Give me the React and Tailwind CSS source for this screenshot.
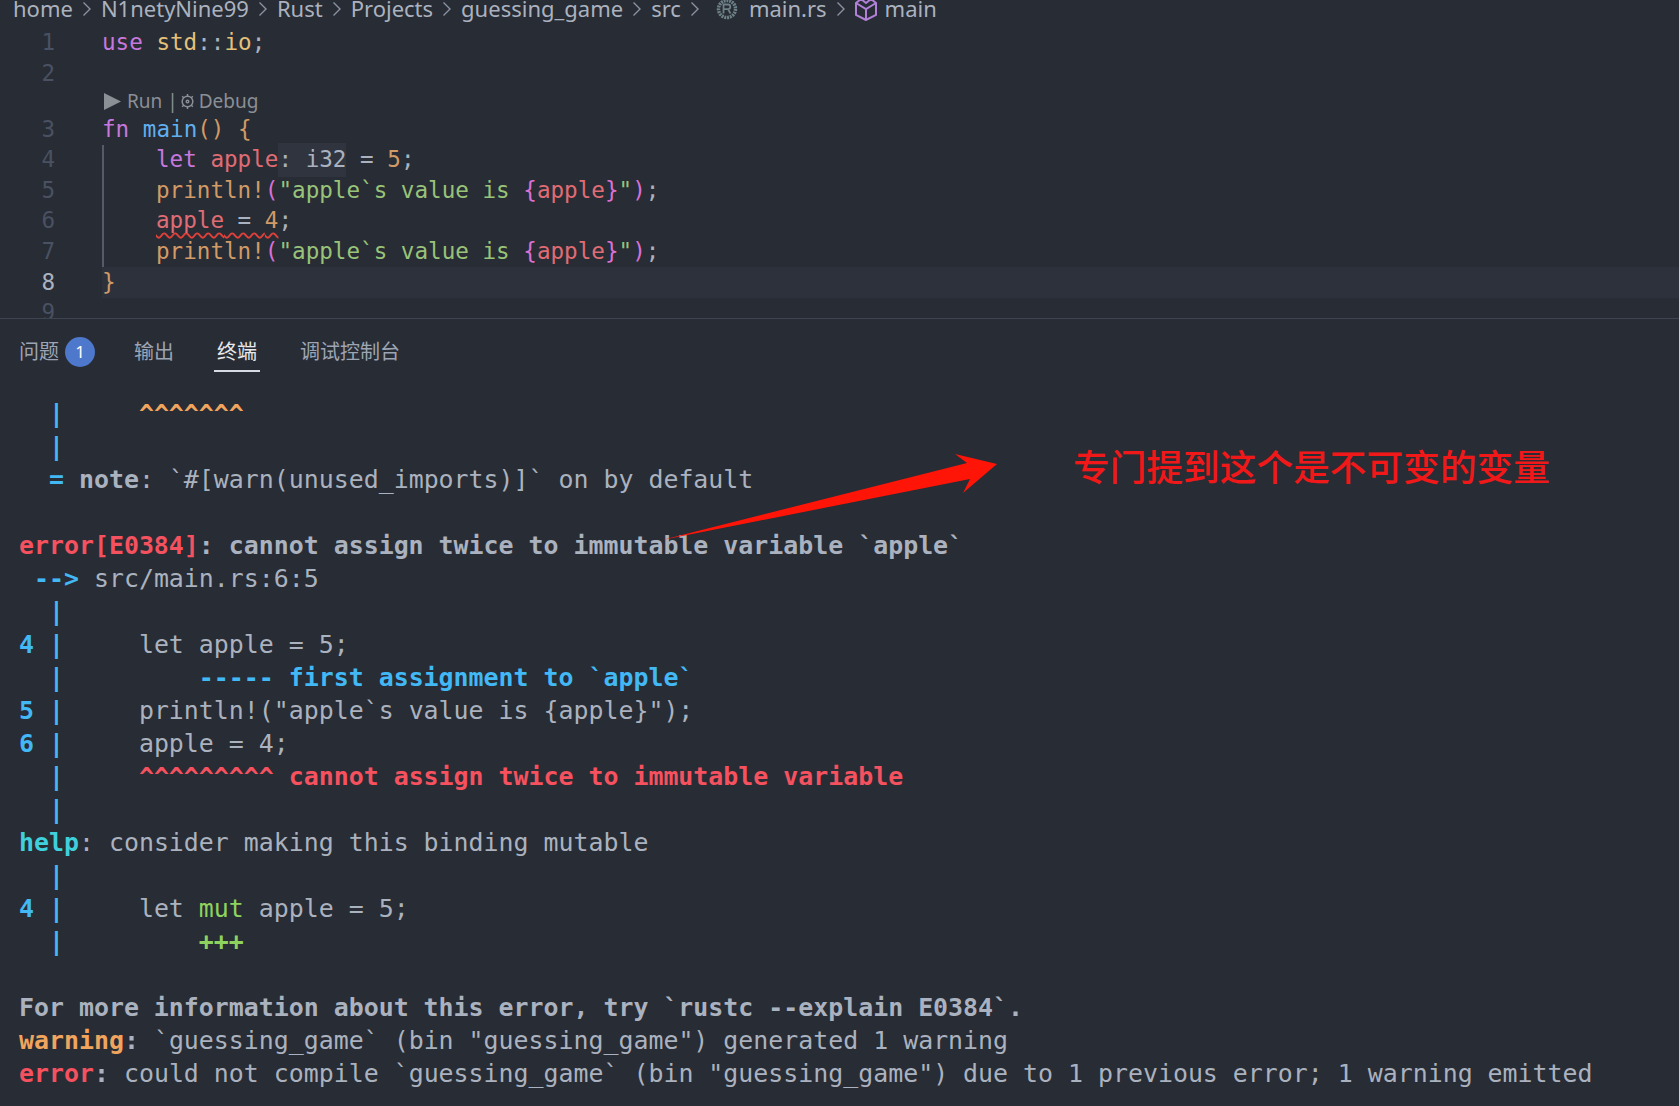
import React from "react";

const mono = "font-['DejaVu_Sans_Mono','Liberation_Mono',monospace]";
const sans = "font-['Noto_Sans','Noto_Sans_CJK_SC',sans-serif]";

const blue = "text-[#42b8f5] font-bold";
const red = "text-[#f5515f] font-bold";
const green = "text-[#8fd35f] font-bold";
const orange = "text-[#f0a45d] font-bold";
const cyan = "text-[#3fd0dc] font-bold";
const strong = "text-[#abb2bf] font-bold";

// [className, text] pairs for each terminal row
const terminalRows = [
  [[blue, "  |"], [orange, "     ^^^^^^^"]],
  [[blue, "  |"]],
  [[blue, "  = "], [strong, "note"], ["", ": `#[warn(unused_imports)]` on by default"]],
  [],
  [[red, "error[E0384]"], [strong, ": cannot assign twice to immutable variable `apple`"]],
  [[blue, " --> "], ["", "src/main.rs:6:5"]],
  [[blue, "  |"]],
  [[blue, "4 |"], ["", "     let apple = 5;"]],
  [[blue, "  |"], [blue, "         ----- first assignment to `apple`"]],
  [[blue, "5 |"], ["", '     println!("apple`s value is {apple}");']],
  [[blue, "6 |"], ["", "     apple = 4;"]],
  [[blue, "  |"], [red, "     ^^^^^^^^^ cannot assign twice to immutable variable"]],
  [[blue, "  |"]],
  [[cyan, "help"], ["", ": consider making this binding mutable"]],
  [[blue, "  |"]],
  [[blue, "4 |"], ["", "     let "], ["text-[#8fd35f]", "mut"], ["", " apple = 5;"]],
  [[blue, "  |"], [green, "         +++"]],
  [],
  [[strong, "For more information about this error, try `rustc --explain E0384`."]],
  [[orange, "warning"], [strong, ": "], ["", '`guessing_game` (bin "guessing_game") generated 1 warning']],
  [[red, "error"], [strong, ": "], ["", 'could not compile `guessing_game` (bin "guessing_game") due to 1 previous error; 1 warning emitted']],
];

const kw = "text-[#c678dd]";
const fn = "text-[#61afef]";
const vari = "text-[#e06c75]";
const str = "text-[#98c379]";
const num = "text-[#d19a66]";
const gold = "text-[#e5c07b]";
const plain = "text-[#abb2bf]";
const brace = "text-[#da70d6]";

const Println = () => (
  <>
    <span className={num}>println!</span>
    <span className={brace}>(</span>
    <span className={str}>"apple`s value is </span>
    <span className={brace}>{"{"}</span>
    <span className={vari}>apple</span>
    <span className={brace}>{"}"}</span>
    <span className={str}>"</span>
    <span className={brace}>)</span>
    <span className={plain}>;</span>
  </>
);

const CodeLine = ({ n, active, guide, children }) => (
  <div className="flex h-[30.6px] items-center">
    <div className={`w-[55px] text-right ${active ? "text-[#abb2bf]" : "text-[#495162]"}`}>{n}</div>
    <div className={`ml-[47px] flex h-full flex-1 items-center whitespace-pre ${active ? "bg-[#2c313c]" : ""} ${guide ? "border-l-2 border-[#555a66]" : ""}`}>
      {children}
    </div>
  </div>
);

const Chevron = () => (
  <svg width="10" height="18" viewBox="0 0 10 18" fill="none" stroke="#8b92a0" strokeWidth="1.4" className="mx-[9px]">
    <path d="M1.5 2.5 8 9l-6.5 6.5" />
  </svg>
);

const Breadcrumb = () => (
  <div className={`flex h-[28px] items-center overflow-hidden pl-[13px] text-[22px] text-[#abb2bf] ${sans}`}>
    <div className="-mt-[11px] flex items-center whitespace-nowrap">
      <span>home</span>
      <Chevron />
      <span>N1netyNine99</span>
      <Chevron />
      <span>Rust</span>
      <Chevron />
      <span>Projects</span>
      <Chevron />
      <span>guessing_game</span>
      <Chevron />
      <span>src</span>
      <Chevron />
      <svg width="24" height="24" viewBox="0 0 24 24" className="ml-[6px] mr-[3px]" fill="none" stroke="#6d8086">
        <circle cx="12" cy="12" r="8.5" strokeWidth="3.5" strokeDasharray="2 0.8" />
        <path d="M8.5 16.5v-9h4.5a2.3 2.3 0 0 1 0 4.6H8.5m4.5 0 2.5 4.4" strokeWidth="1.8" />
      </svg>
      <span className="ml-[7px]">main.rs</span>
      <Chevron />
      <svg width="24" height="24" viewBox="0 0 24 24" fill="none" stroke="#b180d7" strokeWidth="2" className="-ml-[1px]">
        <path d="M12 23 2 18V6l5-4 5 4 5-4 5 4v12z" />
        <path d="M2 6l10 6 10-6M12 12v11" />
      </svg>
      <span className="ml-[7px]">main</span>
    </div>
  </div>
);

const Editor = () => (
  <div className={`h-[319px] overflow-hidden border-b border-[#3e4452] text-[22.6px] ${mono}`}>
    <Breadcrumb />
    <CodeLine n={1}>
      <span className={kw}>use</span>
      <span className={gold}> std</span>
      <span className={plain}>::</span>
      <span className={gold}>io</span>
      <span className={plain}>;</span>
    </CodeLine>
    <CodeLine n={2} />
    <div className={`ml-[104px] flex h-[25px] items-center text-[19px] text-[#8b8f96] ${sans}`}>
      <svg width="17" height="17" viewBox="0 0 18 18" fill="#8b8f96">
        <path d="M0 0l18 9-18 9z" />
      </svg>
      <span className="ml-[6px]">Run | </span>
      <svg width="17" height="17" viewBox="0 0 16 16" fill="none" stroke="#8b8f96" strokeWidth="1.4" className="ml-[1px] mr-[3px]">
        <circle cx="8" cy="8" r="5" />
        <circle cx="8" cy="8" r="1.2" />
        <path d="M8 1v2M8 13v2M3 3l1.4 1.4M11.6 11.6 13 13M13 3l-1.4 1.4M4.4 11.6 3 13" />
      </svg>
      <span>Debug</span>
    </div>
    <CodeLine n={3}>
      <span className={kw}>fn</span>
      <span className={fn}> main</span>
      <span className={num}>() {"{"}</span>
    </CodeLine>
    <CodeLine n={4} guide>
      <span className="ml-[52px]" />
      <span className={kw}>let</span>
      <span className={vari}> apple</span>
      <span className="bg-[#2f343f] text-[#abb2bf]">: i32</span>
      <span className={plain}> = </span>
      <span className={num}>5</span>
      <span className={plain}>;</span>
    </CodeLine>
    <CodeLine n={5} guide>
      <span className="ml-[52px]" />
      <Println />
    </CodeLine>
    <CodeLine n={6} guide>
      <span className="ml-[52px]" />
      <span className="underline decoration-wavy decoration-[#e0403a] decoration-[1.5px] underline-offset-4">
        <span className={vari}>apple</span>
        <span className={plain}> = </span>
        <span className={num}>4</span>
      </span>
      <span className={plain}>;</span>
    </CodeLine>
    <CodeLine n={7} guide>
      <span className="ml-[52px]" />
      <Println />
    </CodeLine>
    <CodeLine n={8} active>
      <span className={num}>{"}"}</span>
    </CodeLine>
    <CodeLine n={9} />
  </div>
);

const Tabs = () => (
  <div className={`flex h-[78px] items-start pl-[19px] pt-[18px] text-[20px] text-[#9da5b4] ${sans}`}>
    <div className="flex h-[30px] items-center">
      <span>问题</span>
      <span className="ml-[6px] flex h-[30px] w-[30px] items-center justify-center rounded-full bg-[#4d78cc] text-[17px] text-white">1</span>
    </div>
    <span className="ml-[39px] flex h-[30px] items-center">输出</span>
    <div className="ml-[40px] flex h-[35px] flex-col items-center border-b-2 border-[#d7dae0] px-[3px] text-[#e6e8ec]">
      <span className="flex h-[30px] items-center">终端</span>
    </div>
    <span className="ml-[40px] flex h-[30px] items-center">调试控制台</span>
  </div>
);

const Terminal = () => (
  <div className={`px-[19px] text-[24.9px] text-[#abb2bf] ${mono}`}>
    {terminalRows.map((row, i) => (
      <div key={i} className="h-[33px] whitespace-pre leading-[33px]">
        {row.map(([cls, text], j) => (
          <span key={j} className={cls}>{text}</span>
        ))}
      </div>
    ))}
  </div>
);

export default function App() {
  return (
    <div className="relative h-[1106px] w-full overflow-hidden bg-[#282c34]">
      <Editor />
      <Tabs />
      <Terminal />

      {/* annotation drawn on top of the screenshot */}
      <svg className="absolute left-[640px] top-[440px]" width="370" height="110" viewBox="640 440 370 110">
        <path d="M662 540 967 463 955 454 997 464 963 493 970 479z" fill="#ff1408" />
      </svg>
      <div className="absolute left-[1073px] top-[441px] whitespace-nowrap text-[36.7px] font-medium leading-[48px] text-[#f01818] font-['Noto_Sans_CJK_SC',sans-serif]">
        专门提到这个是不可变的变量
      </div>
    </div>
  );
}
